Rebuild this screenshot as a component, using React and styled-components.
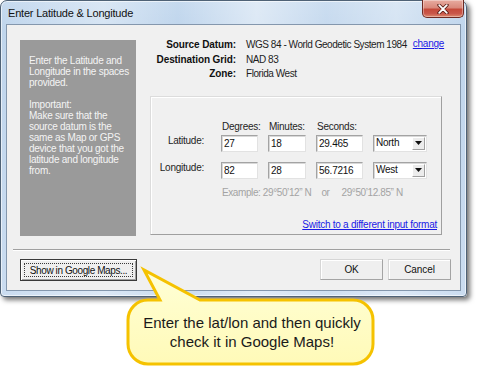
import React from 'react';
import styled, { createGlobalStyle, css } from 'styled-components';

const GlobalStyle = createGlobalStyle`
  html, body { margin: 0; padding: 0; background: #ffffff; }
  body { width: 480px; height: 374px; overflow: hidden; }
  #root { width: 480px; height: 374px; }
`;

const dlgText = css`
  font-family: "Liberation Sans", Arial, sans-serif;
  font-size: 10px;
  letter-spacing: -0.25px;
`;

const Stage = styled.div`
  position: relative;
  width: 480px;
  height: 374px;
`;

const Window = styled.div`
  width: 467px;
  height: 297px;
  box-sizing: border-box;
  border: 1px solid #4f6276;
  border-radius: 7px 7px 4px 4px;
  background:
    linear-gradient(90deg, rgba(255,255,255,0) 0%, rgba(255,255,255,0.35) 22%, rgba(255,255,255,0) 38%, rgba(255,255,255,0.45) 55%, rgba(255,255,255,0.1) 70%, rgba(255,255,255,0.35) 85%, rgba(255,255,255,0) 100%),
    linear-gradient(180deg, #c6daef 0%, #bfd5ec 30px, #cadcf0 100%);
  box-shadow: 3px 3px 5px rgba(0,0,0,0.55), inset 0 0 0 1px rgba(255,255,255,0.6);
  display: flex;
  flex-direction: column;
  padding: 0 5px 5px 5px;
`;

const TitleBar = styled.div`
  height: 23px;
  display: flex;
  align-items: flex-start;
`;

const TitleText = styled.div`
  font-family: "Liberation Sans", Arial, sans-serif;
  font-size: 11px;
  letter-spacing: -0.2px;
  line-height: 25px;
  color: #111;
  padding-left: 2px;
`;

const CloseButton = styled.div`
  margin-left: auto;
  margin-top: -1px;
  margin-right: -3px;
  width: 42px;
  height: 18px;
  box-sizing: border-box;
  border: 1px solid #6e2a22;
  border-top: none;
  border-radius: 0 0 5px 5px;
  background: linear-gradient(180deg, #e8aca0 0%, #d9897c 45%, #c54a3a 55%, #c9574a 80%, #dd8a6e 100%);
  box-shadow: inset 0 0 0 1px rgba(255,255,255,0.35);
  display: flex;
  align-items: center;
  justify-content: center;
`;

const Client = styled.div`
  flex: 1;
  background: #f0f0f0;
  border: 1px solid #8497ad;
  display: flex;
  flex-direction: column;
`;

const TopSection = styled.div`
  display: flex;
  padding: 13px 0 0 13px;
`;

const InfoPanel = styled.div`
  ${dlgText};
  margin-top: 2px;
  width: 116px;
  height: 196px;
  box-sizing: border-box;
  background: #9a9a9a;
  color: #f4f4f4;
  padding: 15px 0 0 9px;
  line-height: 11px;
  white-space: nowrap;
`;

const Para = styled.p`
  margin: 0 0 11px 0;
`;

const RightColumn = styled.div`
  margin-left: 14px;
  width: 292px;
  display: flex;
  flex-direction: column;
`;

const InfoGrid = styled.div`
  ${dlgText};
  display: grid;
  grid-template-columns: 86px auto 1fr;
  column-gap: 10px;
  line-height: 14.5px;
`;

const InfoLabel = styled.div`
  font-weight: bold;
  text-align: right;
  color: #111;
  letter-spacing: -0.1px;
`;

const InfoValue = styled.div`
  color: #1e1e1e;
  white-space: nowrap;
  letter-spacing: -0.45px;
`;

const Link = styled.a`
  ${dlgText};
  color: #1a1ae6;
  text-decoration: underline;
  cursor: pointer;
`;

const ChangeLink = styled(Link)`
  margin-left: -4px;
  position: relative;
  top: -1px;
`;

const GroupBox = styled.div`
  margin-top: 14px;
  width: 292px;
  height: 139px;
  box-sizing: border-box;
  border: 1px solid;
  border-color: #dcdcdc #9f9f9f #9f9f9f #dcdcdc;
  box-shadow: inset 1px 1px 0 #ffffff;
  display: flex;
  flex-direction: column;
  padding-top: 24px;
`;

const CoordRow = styled.div`
  ${dlgText};
  display: grid;
  grid-template-columns: 60px 37px 38px 47px 54px;
  column-gap: 10px;
  align-items: center;
  margin-top: ${p => p.$gap || 0}px;
  line-height: 12px;
  color: #1e1e1e;
`;

const RowLabel = styled.div`
  text-align: right;
  padding-right: 7px;
  margin-top: -4px;
`;

const ColHead = styled.div`
  padding-left: 1px;
`;

const sunken = css`
  height: 17px;
  box-sizing: border-box;
  border: 1px solid;
  border-color: #a3a3a3 #e2e2e2 #e2e2e2 #a3a3a3;
  box-shadow: inset 1px 1px 0 #d8d8d8;
  background: #ffffff;
`;

const TextField = styled.input`
  ${dlgText};
  ${sunken};
  width: 100%;
  padding: 0 0 0 2px;
  color: #111;
  outline: none;
`;

const Combo = styled.div`
  ${dlgText};
  ${sunken};
  display: flex;
  align-items: center;
  padding-left: 2px;
  color: #111;
`;

const DropButton = styled.div`
  margin-left: auto;
  margin-right: 1px;
  width: 13px;
  height: 13px;
  box-sizing: border-box;
  border: 1px solid;
  border-color: #ffffff #a0a0a0 #a0a0a0 #ffffff;
  background: #ececec;
  display: flex;
  align-items: center;
  justify-content: center;
`;

const ExampleRow = styled.div`
  ${dlgText};
  letter-spacing: -0.4px;
  display: flex;
  gap: 10px;
  margin-top: 8px;
  padding-left: 71px;
  color: #a3a3a3;
  line-height: 12px;
  white-space: nowrap;
`;

const ExampleAlt = styled.span`
  margin-left: 2px;
`;

const SwitchRow = styled.div`
  margin-top: auto;
  text-align: right;
  padding: 0 4px 3px 0;
  line-height: 12px;
`;

const Separator = styled.div`
  margin: 13px 10px 0 6px;
  height: 1px;
  background: #a0a0a0;
  border-bottom: 1px solid #ffffff;
`;

const ButtonRow = styled.div`
  display: flex;
  align-items: flex-start;
  margin-top: 8px;
  padding: 0 9px 0 13px;
  gap: 5px;
`;

const Button = styled.button`
  ${dlgText};
  letter-spacing: ${p => (p.$default ? '-0.4px' : '-0.1px')};
  width: ${p => p.$w}px;
  height: ${p => p.$h}px;
  box-sizing: border-box;
  background: #efefef;
  color: #111;
  padding: 0;
  border: 1px solid;
  border-color: ${p => (p.$default ? '#3a3a3a' : '#d6d6d6 #a4a4a4 #a4a4a4 #d6d6d6')};
  box-shadow: ${p => (p.$default ? 'inset 1px 1px 0 #ffffff, inset -1px -1px 0 #a0a0a0' : 'inset 1px 1px 0 #ffffff')};
  margin-left: ${p => (p.$push ? 'auto' : '0')};
  display: flex;
  align-items: center;
  justify-content: center;
`;

const FocusRect = styled.span`
  display: flex;
  align-items: center;
  justify-content: center;
  width: calc(100% - 6px);
  height: calc(100% - 6px);
  box-sizing: border-box;
  border: 1px dotted #3a3a3a;
`;

const Callout = styled.div`
  position: absolute;
  left: 120px;
  top: 265px;
  width: 260px;
  height: 105px;
`;

const CalloutShape = styled.svg`
  position: absolute;
  inset: 0;
`;

const CalloutText = styled.div`
  position: absolute;
  left: 8px;
  top: 35px;
  width: 248px;
  height: 64px;
  display: flex;
  align-items: center;
  justify-content: center;
  text-align: center;
  font-family: "Liberation Sans", Arial, sans-serif;
  font-size: 15px;
  line-height: 19px;
  color: #1a1a1a;
`;

export default function App() {
  return (
    <Stage>
      <GlobalStyle />
      <Window>
        <TitleBar>
          <TitleText>Enter Latitude &amp; Longitude</TitleText>
          <CloseButton>
            <svg width="12" height="10" viewBox="0 0 12 10">
              <path d="M2 1 L10 9 M10 1 L2 9" stroke="#5a1f18" strokeWidth="3.4" strokeLinecap="round" />
              <path d="M2.2 1.2 L9.8 8.8 M9.8 1.2 L2.2 8.8" stroke="#ffffff" strokeWidth="1.8" strokeLinecap="round" />
            </svg>
          </CloseButton>
        </TitleBar>
        <Client>
          <TopSection>
            <InfoPanel>
              <Para>
                Enter the Latitude and<br />Longitude in the spaces<br />provided.
              </Para>
              <Para>
                Important:<br />Make sure that the<br />source datum is the<br />same as Map or GPS<br />device that you got the<br />latitude and longitude<br />from.
              </Para>
            </InfoPanel>
            <RightColumn>
              <InfoGrid>
                <InfoLabel>Source Datum:</InfoLabel>
                <InfoValue>WGS 84 - World Geodetic System 1984</InfoValue>
                <ChangeLink>change</ChangeLink>
                <InfoLabel>Destination Grid:</InfoLabel>
                <InfoValue>NAD 83</InfoValue>
                <span />
                <InfoLabel>Zone:</InfoLabel>
                <InfoValue>Florida West</InfoValue>
                <span />
              </InfoGrid>
              <GroupBox>
                <CoordRow>
                  <span />
                  <ColHead>Degrees:</ColHead>
                  <ColHead>Minutes:</ColHead>
                  <ColHead>Seconds:</ColHead>
                  <span />
                </CoordRow>
                <CoordRow $gap={2}>
                  <RowLabel>Latitude:</RowLabel>
                  <TextField defaultValue="27" />
                  <TextField defaultValue="18" />
                  <TextField defaultValue="29.465" />
                  <Combo>
                    North
                    <DropButton>
                      <svg width="7" height="4" viewBox="0 0 7 4"><path d="M0 0 H7 L3.5 4 Z" fill="#111" /></svg>
                    </DropButton>
                  </Combo>
                </CoordRow>
                <CoordRow $gap={10}>
                  <RowLabel>Longitude:</RowLabel>
                  <TextField defaultValue="82" />
                  <TextField defaultValue="28" />
                  <TextField defaultValue="56.7216" />
                  <Combo>
                    West
                    <DropButton>
                      <svg width="7" height="4" viewBox="0 0 7 4"><path d="M0 0 H7 L3.5 4 Z" fill="#111" /></svg>
                    </DropButton>
                  </Combo>
                </CoordRow>
                <ExampleRow>
                  <span>Example: 29°50’12” N</span>
                  <span>or</span>
                  <ExampleAlt>29°50’12.85” N</ExampleAlt>
                </ExampleRow>
                <SwitchRow>
                  <Link>Switch to a different input format</Link>
                </SwitchRow>
              </GroupBox>
            </RightColumn>
          </TopSection>
          <Separator />
          <ButtonRow>
            <Button $w={117} $h={22} $default>
              <FocusRect>Show in Google Maps...</FocusRect>
            </Button>
            <Button $w={63} $h={21} $push>OK</Button>
            <Button $w={63} $h={21}>Cancel</Button>
          </ButtonRow>
        </Client>
      </Window>
      <Callout>
        <CalloutShape width="260" height="105" viewBox="0 0 260 105">
          <defs>
            <linearGradient id="bubbleFill" x1="0" y1="0" x2="0" y2="1">
              <stop offset="0" stopColor="#ffffd6" />
              <stop offset="1" stopColor="#fffab8" />
            </linearGradient>
          </defs>
          <path
            d="M28 35 L40 35 L24 5 L80 35 L233 35 A20 20 0 0 1 253 55 L253 79 A20 20 0 0 1 233 99 L28 99 A20 20 0 0 1 8 79 L8 55 A20 20 0 0 1 28 35 Z"
            fill="url(#bubbleFill)"
            stroke="#f5c200"
            strokeWidth="3"
            strokeLinejoin="miter"
          />
        </CalloutShape>
        <CalloutText>
          Enter the lat/lon and then quickly<br />check it in Google Maps!
        </CalloutText>
      </Callout>
    </Stage>
  );
}
